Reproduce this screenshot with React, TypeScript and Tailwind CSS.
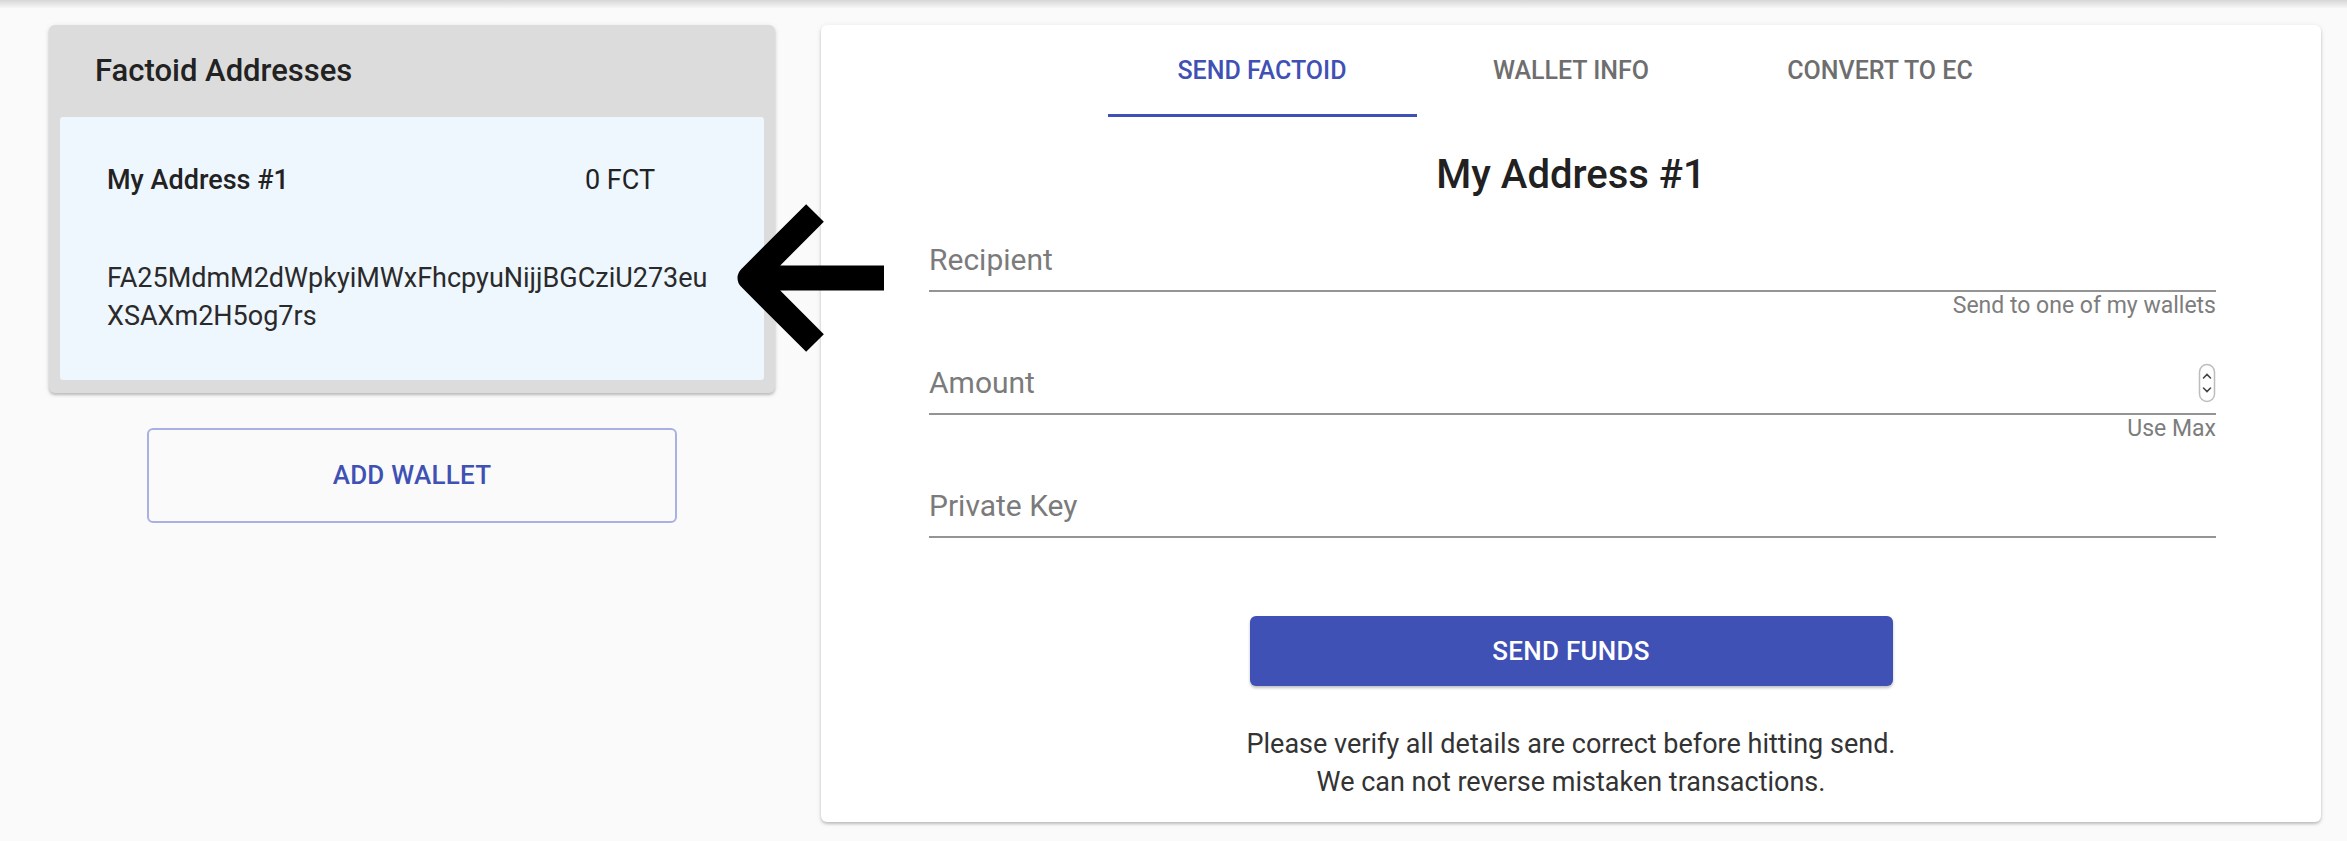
import React from "react";

const TABS = [
  { id: "send", label: "SEND FACTOID", active: true },
  { id: "info", label: "WALLET INFO", active: false },
  { id: "convert", label: "CONVERT TO EC", active: false },
];

function Spinner() {
  return (
    <svg width="18" height="40" viewBox="0 0 18 40" className="shrink-0">
      <rect x="1.5" y="1.5" width="15" height="37" rx="7.5" fill="#fff" stroke="#bdbdbd" strokeWidth="1.5" />
      <path d="M5.5 15 L9 11.5 L12.5 15" fill="none" stroke="#444" strokeWidth="1.6" strokeLinecap="round" />
      <path d="M5.5 25 L9 28.5 L12.5 25" fill="none" stroke="#444" strokeWidth="1.6" strokeLinecap="round" />
    </svg>
  );
}

function Field({ label, helper, spinner }: { label: string; helper?: string; spinner?: boolean }) {
  return (
    <div className="flex flex-col">
      <div className="flex h-[36px] items-center justify-between">
        <span className="text-[30px] leading-[36px] text-[#7b7b7b]">{label}</span>
        {spinner && <Spinner />}
      </div>
      <div className="mt-[12px] h-[2px] bg-[#949494]" />
      <div className="h-[28px] text-right text-[23px] leading-[28px] text-[#7d7d7d]">{helper}</div>
    </div>
  );
}

export default function App() {
  return (
    <div className="relative min-h-[841px] w-[2347px] bg-[#fafafa] font-['Roboto',sans-serif]">
      <div className="h-[8px] bg-linear-to-b from-[#d6d6d6] to-[#f6f6f6]" />

      <div className="flex gap-[46px] pl-[49px] pt-[17px]">
        {/* left column */}
        <div className="flex w-[726px] flex-col items-center">
          <div className="w-full rounded-[6px] bg-[#dcdcdc] shadow-[0_2px_3px_rgba(0,0,0,0.22),0_1px_6px_rgba(0,0,0,0.08)]">
            <div className="flex h-[92px] items-center px-[46px]">
              <h2 className="text-[31px] font-medium text-[#222]">Factoid Addresses</h2>
            </div>
            <div className="mx-[11px] mb-[13px] rounded-[3px] bg-[#eef6fe] px-[47px] pt-[44px] pb-[45px]">
              <div className="flex h-[38px] items-center text-[27px] text-[#222]">
                <span className="w-[478px] font-medium">My Address #1</span>
                <span>0 FCT</span>
              </div>
              <p className="mt-[60px] w-[612px] break-all text-[27px] leading-[38px] text-[#2a2a2a]">
                FA25MdmM2dWpkyiMWxFhcpyuNijjBGCziU273euXSAXm2H5og7rs
              </p>
            </div>
          </div>

          <button className="mt-[35px] flex h-[95px] w-[530px] items-center justify-center rounded-[6px] border-2 border-[#a9b1e2] text-[26px] font-medium tracking-[0.01em] text-[#3f51b5]">
            ADD WALLET
          </button>
        </div>

        {/* right column */}
        <div className="flex h-[797px] w-[1500px] flex-col rounded-[6px] bg-white shadow-[0_2px_3px_rgba(0,0,0,0.2),0_1px_6px_rgba(0,0,0,0.08)]">
          <div className="flex justify-center">
            {TABS.map((t) => (
              <div
                key={t.id}
                className={
                  t.active
                    ? "flex h-[92px] w-[309px] items-center justify-center border-b-[3px] border-[#3f51b5] pt-[3px] text-[25px] font-medium text-[#3f51b5]"
                    : "flex h-[92px] w-[309px] items-center justify-center border-b-[3px] border-transparent pt-[3px] text-[25px] font-medium text-[#6e6e6e]"
                }
              >
                {t.label}
              </div>
            ))}
          </div>

          <h1 className="mt-[34px] text-center text-[40px] font-medium leading-[48px] text-[#212121]">My Address #1</h1>

          <div className="mt-[43px] flex flex-col gap-[45px] pl-[108px] pr-[105px]">
            <Field label="Recipient" helper="Send to one of my wallets" />
            <Field label="Amount" helper="Use Max" spinner />
            <Field label="Private Key" />
          </div>

          <div className="mt-[50px] flex justify-center">
            <button className="h-[70px] w-[643px] rounded-[6px] bg-[#3f51b5] text-[26px] font-medium tracking-[0.01em] text-white shadow-[0_2px_3px_rgba(0,0,0,0.25)]">
              SEND FUNDS
            </button>
          </div>

          <div className="mt-[39px] text-center text-[27px] leading-[38px] text-[#333]">
            <p>Please verify all details are correct before hitting send.</p>
            <p>We can not reverse mistaken transactions.</p>
          </div>
        </div>
      </div>

      {/* pointer arrow overlay */}
      <svg className="absolute left-[720px] top-[195px]" width="180" height="170" viewBox="720 195 180 170">
        <path
          d="M815 213 L750 278 L815 343 M750 278 L884 278"
          fill="none"
          stroke="#000"
          strokeWidth="25"
          strokeLinejoin="round"
          strokeLinecap="butt"
        />
      </svg>
    </div>
  );
}
